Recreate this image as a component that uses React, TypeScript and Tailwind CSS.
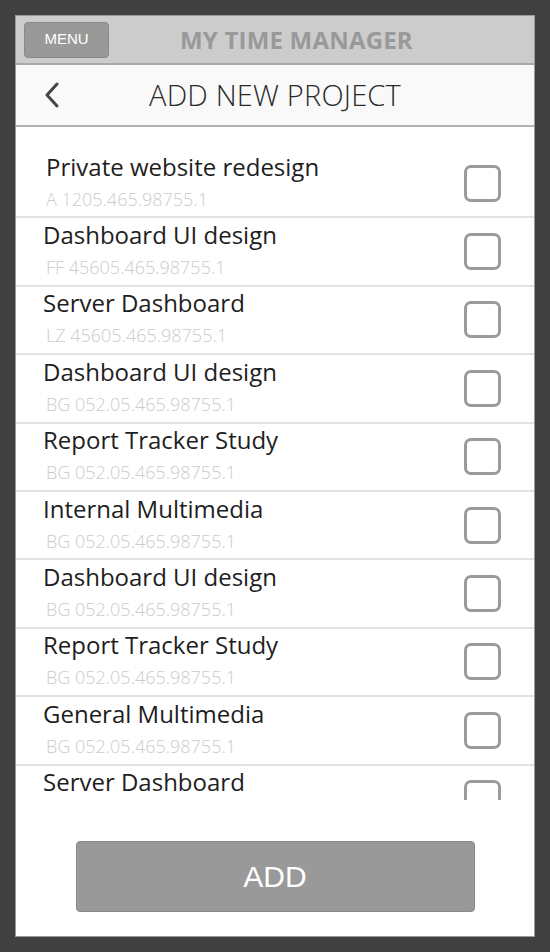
import React from "react";

const rows = [
  { t: "Private website redesign", s: "A 1205.465.98755.1", first: true },
  { t: "Dashboard UI design", s: "FF 45605.465.98755.1" },
  { t: "Server Dashboard", s: "LZ 45605.465.98755.1" },
  { t: "Dashboard UI design", s: "BG 052.05.465.98755.1" },
  { t: "Report Tracker Study", s: "BG 052.05.465.98755.1" },
  { t: "Internal Multimedia", s: "BG 052.05.465.98755.1" },
  { t: "Dashboard UI design", s: "BG 052.05.465.98755.1" },
  { t: "Report Tracker Study", s: "BG 052.05.465.98755.1" },
  { t: "General Multimedia", s: "BG 052.05.465.98755.1" },
  { t: "Server Dashboard", s: "BG 052.05.465.98755.1" },
];

export default function App() {
  return (
    <div className="w-[550px] h-[952px] bg-[#404040] p-[15px]" style={{ fontFamily: '"Open Sans", sans-serif' }}>
      <div className="w-full h-full bg-white flex flex-col border border-[#9a9a9a]">
        {/* top bar */}
        <div className="h-[49px] shrink-0 bg-[#cccccc] border-b-2 border-[#a8a8a8] flex items-center relative">
          <div className="ml-[8px] w-[85px] h-[36px] rounded-[4px] bg-[#999999] border border-[#888] flex items-center justify-center text-white text-[15px]" style={{ fontFamily: '"Liberation Sans", Arial, sans-serif' }}>
            MENU
          </div>
          <div className="ml-[71px] text-[24px] font-bold text-[#999999] tracking-[0.2px]">MY TIME MANAGER</div>
        </div>
        {/* sub header */}
        <div className="h-[62px] shrink-0 bg-[#f9f9f9] border-b-2 border-[#b3b3b3] flex items-center relative">
          <svg className="absolute left-[27px] top-[17px]" width="20" height="26" viewBox="0 0 20 26">
            <path d="M14 2 L4 13 L14 24" fill="none" stroke="#444" strokeWidth="3" strokeLinecap="round" strokeLinejoin="round" />
          </svg>
          <div className="w-full text-center text-[29px] font-light text-[#2a2a2a] tracking-[0.2px]">ADD NEW PROJECT</div>
        </div>
        {/* list */}
        <div className="h-[673px] shrink-0 overflow-hidden pt-[23px]">
          {rows.map((r, i) => (
            <div key={i} className="h-[68.4px] border-b-2 border-[#e2e2e2] flex items-center box-border relative">
              <div className={`flex-1 ${r.first ? "pl-[30px]" : "pl-[27px]"}`}>
                <div className="text-[24px] leading-[30px] text-[#1e1e1e] -mt-[3px]">{r.t}</div>
                <div className={`text-[18px] leading-[26px] font-light text-[#cccccc] mt-[4px] ${r.first ? "" : "pl-[3px]"}`}>{r.s}</div>
              </div>
              <div className="w-[37px] h-[37px] rounded-[7px] border-[3px] border-[#9a9a9a] mr-[33px] shrink-0"></div>
            </div>
          ))}
        </div>
        {/* button */}
        <div className="flex-1 flex items-start justify-center pt-[41px]">
          <div className="w-[399px] h-[71px] bg-[#999999] border border-[#8a8a8a] rounded-[4px] flex items-center justify-center text-white text-[30px]" style={{ fontFamily: '"Liberation Sans", Arial, sans-serif' }}>
            ADD
          </div>
        </div>
      </div>
    </div>
  );
}
